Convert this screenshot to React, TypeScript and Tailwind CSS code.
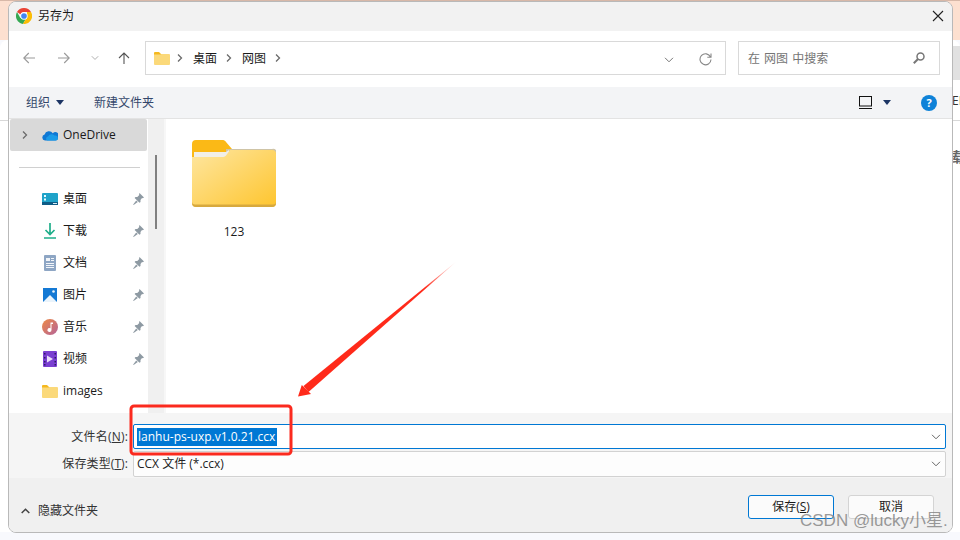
import React from "react";

const UI = '"Open Sans","Noto Sans CJK SC","Noto Sans",sans-serif';

function ChevronR({ className = "" }: { className?: string }) {
  return (
    <svg width="6" height="10" viewBox="0 0 6 10" className={className} fill="none" stroke="#6b6b6b" strokeWidth="1.3">
      <path d="M1 1.5 4.5 5 1 8.5" />
    </svg>
  );
}
function ChevronD({ color = "#666", w = 10 }: { color?: string; w?: number }) {
  return (
    <svg width={w} height="6" viewBox="0 0 10 6" fill="none" stroke={color} strokeWidth="1">
      <path d="M1 .8 5 4.8 9 .8" />
    </svg>
  );
}
function Caret() {
  return (
    <svg width="8" height="5" viewBox="0 0 8 5"><path d="M0 0h8L4 5z" fill="#1c3564" /></svg>
  );
}
function ChromeLogo() {
  return (
    <svg width="16" height="16" viewBox="0 0 48 48">
      <path d="M3 12A24 24 0 0 0 21 47.8L31 30 24 24 13 30z" fill="#34a853" />
      <path d="M45 12A24 24 0 0 1 21 47.8L32 29 33 12z" fill="#fbbc05" />
      <path d="M3 12A24 24 0 0 1 24 0a24 24 0 0 1 21 12H24a12 12 0 0 0-11 7z" fill="#ea4335" />
      <circle cx="24" cy="24" r="11" fill="#fff" />
      <circle cx="24" cy="24" r="8.5" fill="#4285f4" />
    </svg>
  );
}
function SmallFolder() {
  return (
    <svg width="16" height="14" viewBox="0 0 16 14">
      <path d="M0 2a1 1 0 0 1 1-1h4l2 2h8v3H0z" fill="#f5b81e" />
      <path d="M0 3.5h6.500l1-.5H15a1 1 0 0 1 1 1v9a1 1 0 0 1-1 1H1a1 1 0 0 1-1-1z" fill="#fbd97a" />
    </svg>
  );
}
function BigFolder() {
  return (
    <svg width="84" height="68" viewBox="0 0 84 68">
      <defs>
        <linearGradient id="bf" x1="0" y1="0" x2="1" y2="1">
          <stop offset="0" stopColor="#fee6a0" />
          <stop offset="1" stopColor="#fec52e" />
        </linearGradient>
      </defs>
      <path d="M0 5a4 4 0 0 1 4-4h26c2 0 3 .5 4 2l6 7h40a4 4 0 0 1 4 4v10H0z" fill="#fbb916" />
      <path d="M34 10h46a4 4 0 0 1 4 1v3H34z" fill="#cfc4a6" />
      <path d="M2 13h32l3-2v10H2z" fill="#f1efe9" />
      <path d="M0 18h30c1.500 0 3-.5 4-1.500L38 11h42a4 4 0 0 1 4 4v49a4 4 0 0 1-4 4H4a4 4 0 0 1-4-4z" fill="url(#bf)" />
      <path d="M0 64a4 4 0 0 0 4 4h76a4 4 0 0 0 4-4v-1.500a3 3 0 0 1-3 3H3a3 3 0 0 1-3-3z" fill="#d7a93e" />
    </svg>
  );
}
function Pin() {
  return (
    <svg width="11" height="12" viewBox="0 0 11 12" fill="#8e9aa3">
      <path d="M6.500 0 11 4.500 9.800 5.300 9 4.900 7.500 7 7.500 9 6.500 9.800 1.600 5 2.500 4 4.300 4 6.300 2 6 1.200z" />
      <path d="M3.200 7.400.2 11.600l.4.400 4.200-3z" />
    </svg>
  );
}
const navIcons: Record<string, React.ReactNode> = {
  desk: (
    <svg width="16" height="12" viewBox="0 0 16 12">
      <rect width="16" height="12" rx="1" fill="#1fa3c9" />
      <rect y="9" width="16" height="3" fill="#0f5c86" />
      <rect x="2" y="2" width="2" height="2" fill="#e8fbff" />
      <rect x="2" y="5.500" width="2" height="2" fill="#e8fbff" />
      <rect x="11" y="10" width="4" height="1" fill="#d6eef7" />
    </svg>
  ),
  down: (
    <svg width="14" height="16" viewBox="0 0 14 16" fill="none" stroke="#1fae8a" strokeWidth="1.700">
      <path d="M7 0v11M2.500 7 7 11.500 11.500 7M1 15h12" />
    </svg>
  ),
  doc: (
    <svg width="12" height="16" viewBox="0 0 12 16">
      <rect width="12" height="16" rx="1" fill="#8ea6c4" />
      <path d="M2 3h4v3H2zM7 3h3v1H7zM7 5h3v1H7zM2 8h8v1H2zM2 10h8v1H2zM2 12h8v1H2z" fill="#f2f5f9" />
    </svg>
  ),
  pic: (
    <svg width="14" height="14" viewBox="0 0 14 14">
      <rect width="14" height="14" fill="#1479d4" />
      <path d="M0 14 7 7l7 7z" fill="#eaf4fc" />
      <circle cx="10.500" cy="3.500" r="1.300" fill="#eaf4fc" />
    </svg>
  ),
  music: (
    <svg width="16" height="16" viewBox="0 0 16 16">
      <defs>
        <linearGradient id="mg" x1="0" y1="0" x2="1" y2="1">
          <stop offset="0" stopColor="#ee8a45" />
          <stop offset="1" stopColor="#b4639a" />
        </linearGradient>
      </defs>
      <circle cx="8" cy="8" r="8" fill="url(#mg)" />
      <path d="M8.500 3.500h2.500v1.500H9.500v6a2 2 0 1 1-1-1.700z" fill="#fff" />
    </svg>
  ),
  video: (
    <svg width="14" height="16" viewBox="0 0 14 16">
      <rect width="14" height="16" rx="1" fill="#7a3fd1" />
      <path d="M4 4.500v7l6-3.500z" fill="#e9dcfb" />
      <path d="M1 2h1.500v1.500H1zM1 6h1.500v1.500H1zM1 10h1.500v1.500H1zM1 13h1.500v1.500H1zM11.500 2H13v1.500h-1.500zM11.500 6H13v1.500h-1.500zM11.500 10H13v1.500h-1.500zM11.500 13H13v1.500h-1.500z" fill="#2e1a66" />
    </svg>
  ),
  folder: <SmallFolder />,
};
const navRows = [
  { k: "desk", t: "桌面", pin: true },
  { k: "down", t: "下载", pin: true },
  { k: "doc", t: "文档", pin: true },
  { k: "pic", t: "图片", pin: true },
  { k: "music", t: "音乐", pin: true },
  { k: "video", t: "视频", pin: true },
  { k: "folder", t: "images", pin: false },
];

function Sidebar() {
  return (
    <div className="w-[139px] shrink-0 pl-[1px] flex flex-col overflow-hidden">
      <div className="h-[32px] shrink-0 w-[137px] rounded-[2px] bg-[#d9d9d9] flex items-center">
        <ChevronR className="ml-[12px]" />
        <svg width="16" height="11" viewBox="0 0 16 11" className="ml-[14px]">
          <path d="M3 10.500A3 3 0 0 1 2.600 4.600 4.500 4.500 0 0 1 10.800 3.300 3.300 3.300 0 0 1 16 8c0 1.500-1 2.500-2.500 2.500z" fill="#0f78d4" />
          <path d="M5 10.500h8.500A2.500 2.500 0 0 0 16 8c0-1.500-1.500-3-3.500-2.500A4 4 0 0 0 6 6.500 2.200 2.200 0 0 0 5 10.500z" fill="#1a9be8" />
        </svg>
        <span className="ml-[5px] text-[12px] text-[#1a1a1a]">OneDrive</span>
      </div>
      <div className="mt-[16px] ml-[9px] w-[121px] h-px shrink-0 bg-[#d0d0d0]" />
      <div className="mt-[15px] flex flex-col">
        {navRows.map((r) => (
          <div key={r.t} className="h-[32px] shrink-0 flex items-center">
            <div className="ml-[32px] w-[16px] flex justify-center">{navIcons[r.k]}</div>
            <span className="ml-[5px] text-[12px] text-[#1a1a1a]">{r.t}</span>
            {r.pin && (
              <span className="ml-auto mr-[4px] flex">
                <Pin />
              </span>
            )}
          </div>
        ))}
      </div>
    </div>
  );
}

function Annotations() {
  return (
    <svg width="960" height="540" viewBox="0 0 960 540" className="absolute left-0 top-0 pointer-events-none">
      <defs>
        <linearGradient id="ar" x1="457" y1="261" x2="425" y2="288" gradientUnits="userSpaceOnUse">
          <stop offset="0" stopColor="#ff2a1a" stopOpacity="0" />
          <stop offset="1" stopColor="#ff2a1a" />
        </linearGradient>
      </defs>
      <rect x="131" y="406" width="160" height="48" rx="3" fill="none" stroke="#fb2a1e" strokeWidth="3" />
      <path d="M457 261 308.500 392 303.500 386z" fill="url(#ar)" />
      <path d="M298 396.500 301.800 385 305 388 307.500 390.500 311 394z" fill="#ff2a1a" />
    </svg>
  );
}

export default function App() {
  return (
    <div className="relative w-[960px] h-[540px] overflow-hidden bg-[#f8f9fd]" style={{ fontFamily: UI }}>
      {/* Page behind the dialog */}
      <div className="h-[40px] bg-[#fde0d0]" />
      <div className="h-[500px] bg-white rounded-tl-[8px] rounded-tr-[8px] flex flex-col items-end">
        <div className="mt-[6px] w-[10px] h-[34px] bg-[#e1e1e1]" />
        <div className="mt-[13px] w-[8px] text-[12px] leading-4 overflow-hidden whitespace-nowrap text-[#333]">EM</div>
        <div className="mt-[11px] h-px w-full bg-[#d8d8d8]" />
        <div className="mt-[26px] w-[8px] text-[14px] leading-5 font-bold overflow-hidden whitespace-nowrap text-[#666]">载</div>
        <div className="mt-auto h-[8px] w-full bg-[#f8f9fd]" />
      </div>
      <div className="absolute left-0 top-0 w-full h-px bg-[#d8b8a8]" />

      {/* Dialog */}
      <div className="absolute left-[8px] top-[1px] w-[945px] h-[532px] rounded-[8px] border border-[#b9b9b9] bg-white overflow-hidden flex flex-col">
        <div className="h-[29px] pb-[2px] bg-[#f2f2f2] flex items-center shrink-0">
          <span className="ml-[7px] flex"><ChromeLogo /></span>
          <span className="ml-[6px] text-[12px] text-[#1a1a1a]">另存为</span>
          <svg width="14" height="14" viewBox="0 0 14 14" className="ml-auto mr-[7px]" fill="none" stroke="#222" strokeWidth="1.100">
            <path d="M2 2 12 12M12 2 2 12" />
          </svg>
        </div>

        <div className="h-[56px] pb-[2px] shrink-0 flex items-center">
          <svg width="12" height="12" viewBox="0 0 12 12" className="ml-[14px]" fill="none" stroke="#9a9a9a" strokeWidth="1.100">
            <path d="M12 6H.8M5.800 1 .8 6l5 5" />
          </svg>
          <svg width="12" height="12" viewBox="0 0 12 12" className="ml-[23px]" fill="none" stroke="#9a9a9a" strokeWidth="1.100">
            <path d="M0 6h11.200M6.200 1l5 5-5 5" />
          </svg>
          <span className="ml-[21px] flex"><ChevronD color="#9a9a9a" w={8} /></span>
          <svg width="12" height="12" viewBox="0 0 12 12" className="ml-[19px]" fill="none" stroke="#555" strokeWidth="1.100">
            <path d="M6 12V1M1 6l5-5 5 5" />
          </svg>
          <div className="ml-[15px] w-[581px] h-[34px] border border-[#d9d9d9] flex items-center">
            <span className="ml-[8px] flex"><SmallFolder /></span>
            <ChevronR className="ml-[7px]" />
            <span className="ml-[10px] mt-[1px] text-[12px] text-[#1a1a1a]">桌面</span>
            <ChevronR className="ml-[9px]" />
            <span className="ml-[10px] mt-[1px] text-[12px] text-[#1a1a1a]">网图</span>
            <ChevronR className="ml-[9px]" />
            <span className="ml-auto mt-[3px] flex"><ChevronD color="#777" /></span>
            <svg width="13" height="13" viewBox="0 0 13 13" className="ml-[25px] mr-[13px] mt-[3px]" fill="none" stroke="#888" strokeWidth="1.100">
              <path d="M11.500 4A5.500 5.500 0 1 0 12 6.500M12 .5V4.200H8.300" />
            </svg>
          </div>
          <div className="ml-[12px] w-[202px] h-[34px] border border-[#d9d9d9] flex items-center">
            <span className="ml-[9px] mt-[1px] text-[12px] text-[#757575] whitespace-pre [word-spacing:1px]">在 网图 中搜索</span>
            <svg width="12" height="12" viewBox="0 0 12 12" className="ml-auto mr-[14px]" fill="none" stroke="#777" strokeWidth="1.500">
              <circle cx="7.500" cy="4.500" r="3.500" />
              <path d="M5 7 .8 11.200" strokeWidth="2" />
            </svg>
          </div>
        </div>

        <div className="h-[32px] shrink-0 bg-[#f3f4f6] border-b border-[#e3e3e3] flex items-center">
          <span className="ml-[17px] text-[12px] text-[#33476b]">组织</span>
          <span className="ml-[6px] flex"><Caret /></span>
          <span className="ml-[30px] text-[12px] text-[#33476b]">新建文件夹</span>
          <svg width="13" height="13" viewBox="0 0 13 13" className="ml-auto" fill="none" stroke="#111" strokeWidth="1">
            <rect x=".5" y=".5" width="12" height="9.500" />
            <path d="M0 12.500h13" />
          </svg>
          <span className="ml-[11px] flex"><Caret /></span>
          <span className="ml-[30px] mr-[15px] w-[16px] h-[16px] rounded-full bg-[#0f82d8] text-white text-[11px] font-bold leading-4 text-center">?</span>
        </div>

        <div className="h-[294px] shrink-0 flex">
          <Sidebar />
          <div className="w-[16px] bg-[#f0f0f0] pt-[36px] pl-[7px] shrink-0">
            <div className="w-[2px] h-[74px] bg-[#808080]" />
          </div>
          <div className="flex-1 border-l-2 border-[#f7f7f7] pl-[26px] pt-[20px]">
            <div className="w-[84px] flex flex-col items-center">
              <BigFolder />
              <span className="mt-[17px] text-[12px] leading-4 text-[#1a1a1a]">123</span>
            </div>
          </div>
        </div>

        <div className="h-[65px] shrink-0 bg-[#f5f5f5] pt-[11px] flex flex-col gap-[2px]">
          <div className="flex items-center h-[25px]">
            <span className="w-[119px] text-right text-[12px] text-[#333] tracking-[0.2px]">文件名(<u>N</u>):</span>
            <div className="ml-[5px] w-[813px] h-[25px] bg-white border border-[#0078d4] rounded-[2px] flex items-center">
              <span className="ml-[3px] bg-[#0078d4] text-white text-[12px] leading-[18px] pl-[1px] pr-[2px]">lanhu-ps-uxp.v1.0.21.ccx</span>
              <span className="ml-auto mr-[4px] flex"><ChevronD color="#666" /></span>
            </div>
          </div>
          <div className="flex items-center h-[26px]">
            <span className="w-[119px] text-right text-[12px] text-[#333] tracking-[0.1px]">保存类型(<u>T</u>):</span>
            <div className="ml-[5px] w-[813px] h-[26px] bg-[#fdfdfd] border border-[#d2d2d2] rounded-[2px] flex items-center">
              <span className="ml-[3px] text-[12px] text-[#222]">CCX 文件 (*.ccx)</span>
              <span className="ml-auto mr-[4px] flex"><ChevronD color="#666" /></span>
            </div>
          </div>
        </div>

        <div className="flex-1 bg-[#f0f0f0] flex items-start">
          <div className="mt-[24px] flex items-center">
            <svg width="9" height="6" viewBox="0 0 9 6" className="ml-[12px]" fill="none" stroke="#444" strokeWidth="1.500">
              <path d="M.7 5 4.500 1.200 8.300 5" />
            </svg>
            <span className="ml-[8px] text-[12px] text-[#333]">隐藏文件夹</span>
          </div>
          <button className="ml-auto mt-[17px] w-[86px] h-[24px] rounded-[3px] bg-[#fbfbfb] border border-[#0078d4] text-[12px] text-[#1a1a1a]">保存(<u>S</u>)</button>
          <button className="ml-[14px] mr-[18px] mt-[17px] w-[86px] h-[24px] rounded-[3px] bg-[#fbfbfb] border border-[#d4d4d4] text-[12px] text-[#1a1a1a]">取消</button>
        </div>
      </div>

      <Annotations />
      <span
        className="absolute left-[800px] top-[511px] text-[17px] leading-5 whitespace-nowrap text-[#7f7f7f]/80"
        style={{ fontFamily: '"Liberation Sans","Noto Sans CJK SC",sans-serif' }}
      >
        CSDN @lucky小星.
      </span>
    </div>
  );
}
